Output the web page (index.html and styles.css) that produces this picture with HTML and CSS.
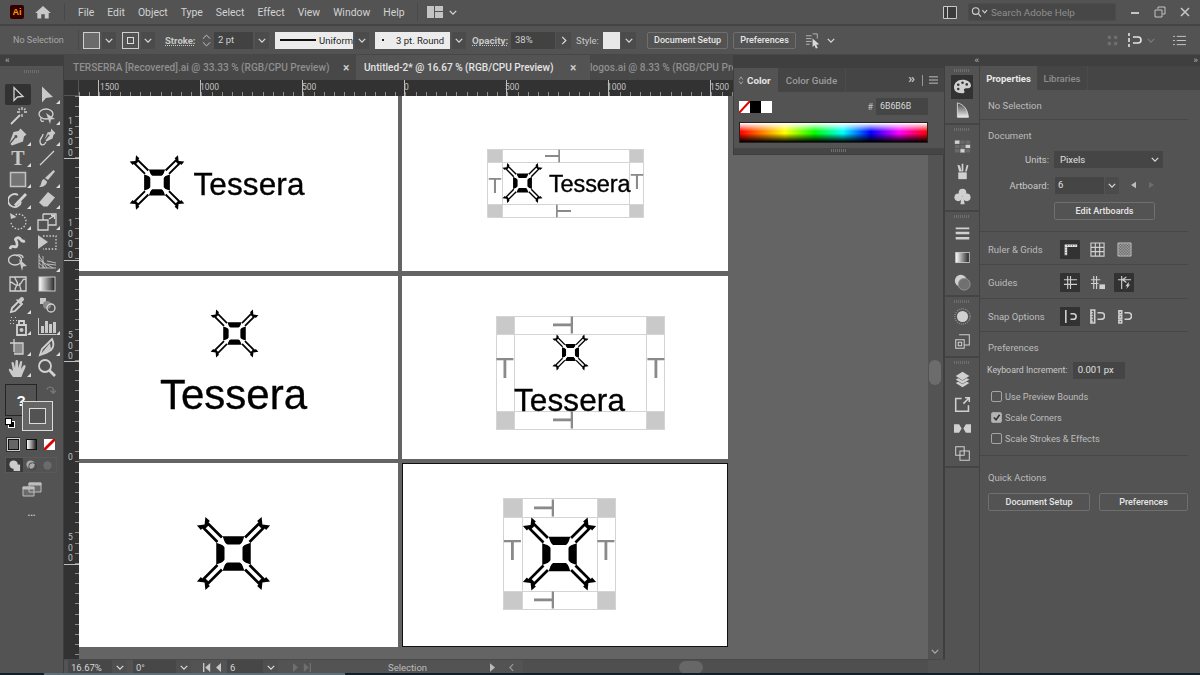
FILE: index.html
```html
<!DOCTYPE html>
<html lang="en">
<head>
<meta charset="utf-8">
<title>Illustrator</title>
<link rel="stylesheet" href="styles.css">
</head>
<body>
<svg class="defs" width="0" height="0" aria-hidden="true">
  <defs>
    <linearGradient id="gr"><stop offset="0" stop-color="#fff"/><stop offset="1" stop-color="#222"/></linearGradient>
    <pattern id="chk" width="3" height="3" patternUnits="userSpaceOnUse"><rect width="1.500" height="1.500" fill="#b8b8b8"/><rect x="1.500" y="1.500" width="1.500" height="1.500" fill="#b8b8b8"/></pattern>
    <g id="arm">
      <path fill="#000" d="M26-6H53V-8.500L61-8 54.500 0 61 8 53 8.500V6H26z"/>
      <path fill="#fff" d="M0-2.400H50V2.400H0z"/>
    </g>
    <symbol id="logo" viewBox="-50 -50 100 100">
      <path fill="#000" d="M-14.500-23H14.500L10.500-12H-10.500zM14.500 23H-14.500L-10.500 12H10.500zM-23-14.500V14.500L-12 10.500V-10.500zM23 14.500V-14.500L12-10.500V10.500z"/>
      <use href="#arm" transform="rotate(45)"/>
      <use href="#arm" transform="rotate(135)"/>
      <use href="#arm" transform="rotate(225)"/>
      <use href="#arm" transform="rotate(315)"/>
    </symbol>
  </defs>
</svg>

<header class="menubar">
  <div class="ai-logo">Ai</div>
  <svg class="home" viewBox="0 0 18 16"><path d="M9 1L0 9h2.500v6.500h4.500v-5h4v5h4.500V9H18z"/></svg>
  <span class="vsep"></span>
  <nav class="menu"><span>File</span><span>Edit</span><span>Object</span><span>Type</span><span>Select</span><span>Effect</span><span>View</span><span>Window</span><span>Help</span></nav>
  <span class="vsep sep2"></span>
  <svg class="wsicon" viewBox="0 0 16 12"><path d="M0 0h7v12H0zM8 0h8v5H8zM8 6h8v6H8z"/></svg>
  <svg class="chev" viewBox="0 0 10 6"><path d="M1 1l4 4 4-4"/></svg>
  <div class="spacer"></div>
  <svg class="arrange" viewBox="0 0 14 13"><path d="M.5.500h13v12H.5zM4.500.500v12"/></svg>
  <div class="search"><svg viewBox="0 0 18 12"><circle cx="5" cy="5" r="3.500"/><path d="M8 8l2.500 3M12 4l2.500 3L17 4"/></svg><span>Search Adobe Help</span></div>
  <div class="winbtns">
    <svg viewBox="0 0 12 12"><path d="M2 7h8" stroke-width="2"/></svg>
    <svg viewBox="0 0 12 12"><path d="M4 3V1h7v7H8.500M1 4h7v7H1z"/></svg>
    <svg viewBox="0 0 12 12"><path d="M2 2l8 8M10 2l-8 8" stroke-width="1.600"/></svg>
  </div>
</header>

<section class="ctrl">
  <span class="grip-v"></span>
  <span class="lbl dim nosel">No Selection</span>
  <span class="vline"></span>
  <span class="swatch gray"></span><span class="dd"><svg class="chev" viewBox="0 0 10 6"><path d="M1 1l4 4 4-4"/></svg></span>
  <span class="swatch strokeS"><i></i></span><span class="dd"><svg class="chev" viewBox="0 0 10 6"><path d="M1 1l4 4 4-4"/></svg></span>
  <span class="lbl ul strokeL">Stroke:</span>
  <span class="spin"><svg viewBox="0 0 10 16"><path d="M1 6l4-4 4 4M1 10l4 4 4-4"/></svg></span>
  <span class="field w2pt">2 pt</span><span class="dd"><svg class="chev" viewBox="0 0 10 6"><path d="M1 1l4 4 4-4"/></svg></span>
  <span class="wfield uni"><i class="strokeline"></i><b>Uniform</b></span><span class="dd"><svg class="chev" viewBox="0 0 10 6"><path d="M1 1l4 4 4-4"/></svg></span>
  <span class="wfield rnd"><i class="dot"></i><b>3 pt. Round</b></span><span class="dd"><svg class="chev" viewBox="0 0 10 6"><path d="M1 1l4 4 4-4"/></svg></span>
  <span class="lbl ul opL">Opacity:</span>
  <span class="field wop">38%</span><span class="dd nar"><svg class="chevr" viewBox="0 0 6 10"><path d="M1 1l4 4-4 4"/></svg></span>
  <span class="lbl styL">Style:</span>
  <span class="wswatch"></span><span class="dd nar2"><svg class="chev" viewBox="0 0 10 6"><path d="M1 1l4 4 4-4"/></svg></span>
  <span class="btn docb">Document Setup</span>
  <span class="btn prefb">Preferences</span>
  <svg class="arr-ic" viewBox="0 0 18 18"><path d="M1 4h6M1 7h6M1 10h6M1 13h4M8 2h5v5" fill="none"/><path class="f" d="M8 7l7 6-3 .5 1.500 3.500-2 .5-1.500-3.500-2 2z"/></svg>
  <svg class="chev" viewBox="0 0 10 6"><path d="M1 1l4 4 4-4"/></svg>
  <div class="spacer"></div>
  <svg class="dimic" viewBox="0 0 14 14"><path d="M1 1h4v4H1zM9 1h4v4H9zM1 9h4v4H1zM9 9h4v4H9z"/></svg>
  <svg class="mag" viewBox="0 0 16 16"><path d="M2 1v3M2 6v4M2 12v3M6 5h5a3 3 0 0 1 0 6H6"/></svg>
  <svg class="chev dimchev" viewBox="0 0 10 6"><path d="M1 1l4 4 4-4"/></svg>
  <svg class="listic" viewBox="0 0 14 12"><path d="M0 1.500h2M4 1.500h10M0 6h2M4 6h10M0 10.500h2M4 10.500h10"/></svg>
</section>

<main class="work">
  <aside class="tools">
    <div class="striphead"><span class="arrows">‹‹</span></div>
    <div class="griprow"><span class="grip"></span></div>
    <div class="toolgrid">
      <span class="tool active"><svg viewBox="0 0 20 20"><path class="o" d="M6 2.500v13l3.500-3.500 5.500-.5z"/></svg></span>
      <span class="tool m"><svg viewBox="0 0 20 20"><path d="M5 1.500v16l4-4.500 7-1z"/></svg></span>
      <span class="tool"><svg viewBox="0 0 20 20"><path class="o t" d="M3 18L12 9"/><path class="o" d="M14 1v3M14 8v3M9 6h3M16 6h3M10.500 2.500l1.500 1.500M17.500 2.500L16 4"/></svg></span>
      <span class="tool m"><svg viewBox="0 0 20 20"><ellipse class="o" cx="9" cy="8" rx="7" ry="5"/><path class="o" d="M4 12c-1 3 1 4 3 3"/><path d="M9 7l9 6-4 .5-1 4.500z"/></svg></span>
      <span class="tool m"><svg viewBox="0 0 20 20"><path d="M12.500 1.500l6 6-2.500 2-1 5-11 4-1.500-1.500 5-6a1.500 1.500 0 1 0-1-1l-5 6 4-11 5-1z"/></svg></span>
      <span class="tool m"><svg viewBox="0 0 20 20"><path d="M14 1.500l4.500 4.500-2 2-1 3.500-6 3-1-1 3-4a1 1 0 1 0-1-1l-3 4 3-7 3.500-1z"/><path class="o" d="M9 15c-2 4-6 4-6-1 0-3 3-4 3-7"/></svg></span>
      <span class="tool m"><svg viewBox="0 0 20 20"><text class="ttool" x="10" y="17">T</text></svg></span>
      <span class="tool"><svg viewBox="0 0 20 20"><path class="o" d="M3 17L17 3"/></svg></span>
      <span class="tool m"><svg viewBox="0 0 20 20"><path class="rectic" d="M2.500 3.500h15v14h-15z"/></svg></span>
      <span class="tool m"><svg viewBox="0 0 20 20"><path d="M16.500 1l1.500 1.500-7 8.500-3-2zM7 10l3 2.500c0 3.500-3.500 5.500-8 5.500 3-1.500 1.500-7 5-8z"/></svg></span>
      <span class="tool m"><svg viewBox="0 0 20 20"><path class="o t" d="M10 5a6.500 6.500 0 1 0 3 6.500"/><path class="o th" d="M7 15.500L18 4"/></svg></span>
      <span class="tool m"><svg viewBox="0 0 20 20"><path d="M11 2l7 5.500-7.500 9H6.500L2 12.500z"/></svg></span>
      <span class="tool m"><svg viewBox="0 0 20 20"><path class="o dash" d="M5 5.500a7.500 7.500 0 1 1-2 5.500"/><path d="M2 2l1 6 5.500-2z"/></svg></span>
      <span class="tool m"><svg viewBox="0 0 20 20"><path class="o" d="M1 9h10v10H1zM6 3h13v11H11M6 9V3"/><path class="o" d="M12 8l5-3M14 4.500h3.500V8"/></svg></span>
      <span class="tool"><svg viewBox="0 0 20 20"><path class="o th" d="M2 17c2-6 6 1 7-4s-4-5 0-7 3 5 8 3"/></svg></span>
      <span class="tool"><svg viewBox="0 0 20 20"><path class="o dash" d="M6 4h13v13H6"/><path d="M1 3l10 7-10 7z"/></svg></span>
      <span class="tool"><svg viewBox="0 0 20 20"><ellipse class="o" cx="7" cy="7" rx="6.500" ry="5"/><path class="o" d="M8 3c3-2 7-1 7 2"/><path d="M11 6l8 7-4 .5-1 4.500z"/></svg></span>
      <span class="tool m"><svg viewBox="0 0 20 20"><path class="o thin" d="M2 1v14h17M2 3l8 12M2 7l14 8M2 10l6 5M6 3v12M10 8l9 2M10 11l9 1"/></svg></span>
      <span class="tool"><svg viewBox="0 0 20 20"><path class="o" d="M2 3h16v14H2zM2 8c4 0 5 5 9 3s3-8 7-5M7 3c-1 3 4 4 2 8s-2 3-2 6M13 17c0-3-2-4-1-8"/></svg></span>
      <span class="tool"><svg viewBox="0 0 20 20"><rect x="2" y="3" width="16" height="14" fill="url(#gr)" stroke="#ccc"/></svg></span>
      <span class="tool m"><svg viewBox="0 0 20 20"><path class="o t" d="M3 17l1-4 7-7 3 3-7 7z"/><path d="M10 5l2-2c2-3 6 1 3 3l-2 2 1 1-1 1-5-5 1-1z"/></svg></span>
      <span class="tool"><svg viewBox="0 0 20 20"><path d="M3 3h6v6H3z"/><circle cx="10" cy="10" r="4" class="g"/><circle class="o" cx="14" cy="13" r="4"/></svg></span>
      <span class="tool m"><svg viewBox="0 0 20 20"><path d="M2 4h1v1H2zM5 4h1v1H5zM8 4h1v1H8zM2 7h1v1H2zM5 7h1v1H5zM3 1h1v1H3zM7 1h1v1H7z"/><path class="o t" d="M9 9h9v10H9zM11 9V5h5v4"/><circle cx="13.500" cy="14" r="2"/></svg></span>
      <span class="tool m"><svg viewBox="0 0 20 20"><path d="M1 2h1v16h17v1H1zM4 10h3v7H4zM8 5h3v12H8zM12 8h3v9h-3zM16 6h3v11h-3z"/></svg></span>
      <span class="tool m"><svg viewBox="0 0 20 20"><path class="g" d="M6 6h9v11H6z"/><path class="o" d="M2 6h13M6 2v13M6 6h9v11H6"/></svg></span>
      <span class="tool m"><svg viewBox="0 0 20 20"><path class="o t" d="M3 18l2-6L15 2c2 4 2 8-1 11l-5 3z"/><path d="M13 6l1 6-5 4-6 2z"/></svg></span>
      <span class="tool m"><svg viewBox="0 0 20 20"><path d="M5 19C3 16 0 12 1 11s3 1 4 2L3.500 5c0-1.500 2-1.500 2.300 0L7 10 7.500 3c.2-1.500 2.300-1.500 2.500 0l.3 7 1.700-6c.4-1.500 2.400-1 2.200.5L13 11l2.500-3.500c1-1 2.500 0 2 1.500-1 3-3 6-4 10z"/></svg></span>
      <span class="tool"><svg viewBox="0 0 20 20"><circle class="o t" cx="8" cy="8" r="6"/><path class="o th" d="M12.500 12.500L18 18"/></svg></span>
    </div>

    <div class="fillstroke">
      <span class="fillbox">?</span>
      <span class="strokebox"><i></i></span>
      <svg class="swap" viewBox="0 0 12 12"><path d="M2 5a4 4 0 0 1 7-1v5M6 6l3 3 3-3"/></svg>
      <span class="defaults"><i></i><b></b></span>
    </div>
    <div class="moderow">
      <span class="modebtn active"><i class="m-color"></i></span>
      <span class="modebtn"><i class="m-grad"></i></span>
      <span class="modebtn"><svg class="m-none" viewBox="0 0 12 12"><path d="M0 0h12v12H0z" fill="#fff"/><path d="M0 12L12 0" stroke="#d00" stroke-width="3"/></svg></span>
    </div>
    <div class="drawrow">
      <span class="drawbtn active"><svg viewBox="0 0 14 14"><circle cx="6" cy="6" r="4.500"/><rect x="6" y="6" width="7" height="7"/></svg></span>
      <span class="drawbtn"><svg viewBox="0 0 14 14"><circle cx="6" cy="6" r="4.500"/><circle cx="8" cy="8" r="4" fill="none" stroke="#444"/></svg></span>
      <span class="drawbtn faint"><svg viewBox="0 0 14 14"><circle cx="7" cy="7" r="4.500"/></svg></span>
    </div>
    <svg class="screenmode" viewBox="0 0 20 15"><path d="M1 5h11v9H1zM7 1h12v9H7z"/><path class="top" d="M1 5h11v2H1zM7 1h12v2H7z"/></svg>
    <div class="ellip">•••</div>
  </aside>

  <div class="center">
    <div class="tabs">
      <span class="tab t1"><span>TERSERRA [Recovered].ai @ 33.33 % (RGB/CPU Preview)</span><em>×</em></span>
      <span class="tab t2 on"><span>Untitled-2* @ 16.67 % (RGB/CPU Preview)</span><em>×</em></span>
      <span class="tab t3"><span>logos.ai @ 8.33 % (RGB/CPU Preview)</span></span>
    </div>

    <div class="hruler">
      <span class="rcorner"></span>
      <div class="hticks">
        <span class="hl l1">1500</span><span class="hl l2">1000</span><span class="hl l3">500</span><span class="hl l4">0</span><span class="hl l5">500</span><span class="hl l6">1000</span><span class="hl l7">1500</span>
      </div>
    </div>

    <div class="canvasrow">
      <div class="vruler">
        <span class="vl v1">1<br>5<br>0<br>0</span><span class="vl v2">1<br>0<br>0<br>0</span><span class="vl v3">5<br>0<br>0</span><span class="vl v4">0</span><span class="vl v5">5<br>0<br>0</span>
      </div>
      <div class="canvas">
        <div class="boards">
          <div class="board">
            <svg class="art" viewBox="79 96 319 175">
              <use href="#logo" x="129" y="154.500" width="56" height="56"/>
              <text class="word" x="193.500" y="194.500" font-size="31.500" textLength="111" lengthAdjust="spacing">Tessera</text>
            </svg>
          </div>
          <div class="board">
            <svg class="art" viewBox="402 96 326 175">
              <path class="guide-fill" d="M487 149h15v13h-15zM629 149h15v13h-15zM487 204h15v13h-15zM629 204h15v13h-15z"/>
              <path class="guide" d="M487.500 149.500h156v68h-156zM487 162.500h157M487 204.500h157M502.500 149v68M629.500 149v68"/>
              <use href="#logo" x="502" y="162.500" width="41" height="41"/>
              <text class="word" x="549" y="192" font-size="23.500" textLength="81.500" lengthAdjust="spacing">Tessera</text>
              <text class="mark" font-size="22" transform="translate(495 185)" y="8">T</text>
              <text class="mark" font-size="22" transform="translate(637 181)" y="8">T</text>
              <text class="mark" font-size="22" transform="translate(553 156) rotate(90)" y="8">T</text>
              <text class="mark" font-size="22" transform="translate(563 211) rotate(-90)" y="8">T</text>
            </svg>
          </div>
          <div class="board">
            <svg class="art" viewBox="79 276 319 183">
              <use href="#logo" x="210" y="309" width="49" height="49"/>
              <text class="word" x="160" y="409" font-size="42" textLength="147" lengthAdjust="spacing">Tessera</text>
            </svg>
          </div>
          <div class="board">
            <svg class="art" viewBox="402 276 326 183">
              <path class="guide-fill" d="M496 316h19v19h-19zM646 316h19v19h-19zM496 411h19v19h-19zM646 411h19v19h-19z"/>
              <path class="guide" d="M496.500 316.500h168v113h-168zM496 334.500h169M496 411.500h169M514.500 316v114M646.500 316v114"/>
              <use href="#logo" x="552" y="334" width="37" height="37"/>
              <text class="word" x="514" y="411" font-size="31.500" textLength="111" lengthAdjust="spacing">Tessera</text>
              <text class="mark" font-size="30" transform="translate(505 367.500)" y="10.700">T</text>
              <text class="mark" font-size="30" transform="translate(656 367.500)" y="10.700">T</text>
              <text class="mark" font-size="30" transform="translate(564 325) rotate(90)" y="10.700">T</text>
              <text class="mark" font-size="30" transform="translate(564 420) rotate(90)" y="10.700">T</text>
            </svg>
          </div>
          <div class="board">
            <svg class="art" viewBox="79 463 319 184">
              <use href="#logo" x="196" y="516" width="75" height="75"/>
            </svg>
          </div>
          <div class="board current">
            <svg class="art" viewBox="402 463 326 184">
              <path class="guide-fill" d="M503 498h19v19h-19zM597 498h19v19h-19zM503 591h19v19h-19zM597 591h19v19h-19z"/>
              <path class="guide" d="M503.500 498.500h112v111h-112zM503 517.500h113M503 591.500h113M522.500 498v112M597.500 498v112"/>
              <use href="#logo" x="522" y="516.500" width="75" height="75"/>
              <text class="mark" font-size="30" transform="translate(512.500 549)" y="10.700">T</text>
              <text class="mark" font-size="30" transform="translate(606 549)" y="10.700">T</text>
              <text class="mark" font-size="30" transform="translate(545 508) rotate(90)" y="10.700">T</text>
              <text class="mark" font-size="30" transform="translate(545 600) rotate(90)" y="10.700">T</text>
            </svg>
          </div>
        </div>
      </div>
      <div class="vscroll"><span class="vthumb"></span><svg class="chev vdown" viewBox="0 0 10 6"><path d="M1 1l4 4 4-4"/></svg></div>
    </div>

    <footer class="status">
      <span class="sfield szoom">16.67%</span><span class="dd sdd"><svg class="chev" viewBox="0 0 10 6"><path d="M1 1l4 4 4-4"/></svg></span>
      <span class="sfield sang">0°</span><span class="dd sdd"><svg class="chev" viewBox="0 0 10 6"><path d="M1 1l4 4 4-4"/></svg></span>
      <svg class="nav" viewBox="0 0 22 10"><path d="M1 0h1.500v10H1zM9 0v10L3.500 5zM21 0v10l-5.500-5z"/></svg>
      <span class="sfield snum">6</span><span class="dd sdd"><svg class="chev" viewBox="0 0 10 6"><path d="M1 1l4 4 4-4"/></svg></span>
      <svg class="nav dimnav" viewBox="0 0 22 10"><path d="M1 0v10l5.500-5zM13 0v10l5.500-5zM19.500 0H21v10h-1.500z"/></svg>
      <span class="sel">Selection</span>
      <svg class="play" viewBox="0 0 6 10"><path d="M0 0v10l6-5z"/></svg>
      <svg class="chevr back" viewBox="0 0 6 10"><path d="M5 1L1 5l4 4"/></svg>
      <div class="htrack"><span class="hthumb"></span></div>
    </footer>

    <div class="colorpanel">
      <div class="cp-tabs">
        <span class="cp-tab on"><svg class="updown" viewBox="0 0 6 10"><path d="M1 4l2-3 2 3M1 6l2 3 2-3"/></svg>Color</span>
        <span class="cp-tab">Color Guide</span>
        <span class="spacer"></span>
        <span class="cp-more">››</span><span class="cp-bar"></span>
        <svg class="cp-menu" viewBox="0 0 10 8"><path d="M0 .500h10M0 4h10M0 7.500h10"/></svg>
      </div>
      <div class="cp-row">
        <span class="sw-none"><svg viewBox="0 0 11 12"><path d="M0 0h11v12H0z" fill="#fff"/><path d="M0 12L11 0" stroke="#d00" stroke-width="2"/></svg></span>
        <span class="sw-black"></span><span class="sw-white"></span>
        <span class="spacer"></span>
        <span class="hash">#</span><span class="hexf">6B6B6B</span>
      </div>
      <div class="spectrum"></div>
      <div class="cp-foot"><span class="grip"></span></div>
    </div>
  </div>

  <div class="dock">
    <div class="dstrip"><span class="arrows">‹‹</span></div>
    <div class="dgroup g1">
      <span class="grip"></span>
      <span class="dicon active"><svg viewBox="0 0 20 18"><path d="M10 1C4 1 0 5 0 10c0 4 3 7 9 7 3 0 4-1 3-3s0-3 3-3c3 0 5-1 5-3 0-4-4-7-10-7z"/><g class="holes"><circle cx="5" cy="7" r="1.500"/><circle cx="10" cy="4.500" r="1.500"/><circle cx="15" cy="6.500" r="1.500"/><circle cx="5" cy="12" r="1.500"/></g></svg></span>
      <span class="dicon"><svg viewBox="0 0 20 20"><defs><linearGradient id="gt" x1="0" y1="0" x2="0" y2="1"><stop offset="0" stop-color="#444"/><stop offset="1" stop-color="#eee"/></linearGradient></defs><path d="M4 1c8 2 12 8 13 17H4z" fill="url(#gt)" stroke="#ddd"/></svg></span>
    </div>
    <div class="dgroup g2">
      <span class="grip"></span>
      <span class="dicon"><svg viewBox="0 0 20 16"><path d="M1 1h18v14H1z" class="dim"/><path d="M1 1h6v4H1zM13 5h6v5h-6zM7 10h6v5H7z"/><path class="ln" d="M1 5.500h18M1 10.500h18M7 1v14M13 1v14"/></svg></span>
      <span class="dicon"><svg viewBox="0 0 20 20"><path d="M5 11h10v8H5z"/><path d="M6 10L4 2l3 1 2 7zM9 10V1h2v9zM13 10l2-8 2 1-2 7z"/></svg></span>
      <span class="dicon"><svg viewBox="0 0 20 20"><circle cx="10" cy="5.500" r="4.500"/><circle cx="5" cy="11" r="4.500"/><circle cx="15" cy="11" r="4.500"/><path d="M9 10h2l1.500 9h-5z"/></svg></span>
    </div>
    <div class="dgroup g3">
      <span class="grip"></span>
      <span class="dicon"><svg viewBox="0 0 20 16"><path d="M2 1h16v2H2zM2 6h16v3H2zM2 12h16v3H2z"/></svg></span>
      <span class="dicon"><svg viewBox="0 0 20 16"><rect x="2" y="2" width="16" height="12" fill="url(#gr)" stroke="#ccc"/></svg></span>
      <span class="dicon"><svg viewBox="0 0 20 20"><circle cx="8" cy="8" r="7"/><circle cx="12" cy="12" r="7" class="dk"/></svg></span>
    </div>
    <div class="dgroup g4">
      <span class="grip"></span>
      <span class="dicon"><svg viewBox="0 0 20 20"><circle cx="10" cy="10" r="6.500"/><circle class="dashring" cx="10" cy="10" r="9"/></svg></span>
      <span class="dicon"><svg class="lineic" viewBox="0 0 20 20"><path d="M6 2h12v12h-6M2 8h10v10H2zM5 11h4v4H5z"/></svg></span>
    </div>
    <div class="dgroup g5">
      <span class="grip"></span>
      <span class="dicon"><svg viewBox="0 0 20 20"><path d="M10 1l8 5-8 5-8-5zM2 10l3-1.500 5 3 5-3 3 1.500-8 5zM2 14l3-1.500 5 3 5-3 3 1.500-8 5z"/></svg></span>
      <span class="dicon"><svg class="lineic lg" viewBox="0 0 20 20"><path d="M9 3H2v15h15v-7M11 9l7-7M13 2h5v5"/></svg></span>
      <span class="dicon"><svg viewBox="0 0 20 12"><path d="M0 1h6l3 5-3 5H0zM20 1h-6l-3 5 3 5h6z"/></svg></span>
      <span class="dicon"><svg class="lineic" viewBox="0 0 20 20"><path d="M2 2h10v10H2zM7 7h11v11H7z"/></svg></span>
    </div>
  </div>

  <aside class="props">
    <div class="pstrip"><span class="arrows">››</span></div>
    <div class="ptabs"><span class="ptab on">Properties</span><span class="ptab">Libraries</span></div>
    <section class="sec s-nosel"><span class="dimt">No Selection</span></section>
    <section class="sec s-doc">
      <h4>Document</h4>
      <div class="prow r-units"><label>Units:</label><span class="pselect">Pixels<svg class="chev" viewBox="0 0 10 6"><path d="M1 1l4 4 4-4"/></svg></span></div>
      <div class="prow r-art"><label>Artboard:</label><span class="pfield">6</span><span class="dd pdd"><svg class="chev" viewBox="0 0 10 6"><path d="M1 1l4 4 4-4"/></svg></span>
        <svg class="tri" viewBox="0 0 6 8"><path d="M6 0v8L0 4z"/></svg><svg class="tri off" viewBox="0 0 6 8"><path d="M0 0v8l6-4z"/></svg></div>
      <div class="prow r-edit"><span class="btn editb">Edit Artboards</span></div>
    </section>
    <section class="sec s-icons s-ruler">
      <span class="dimt lab">Ruler &amp; Grids</span>
      <span class="picon active"><svg viewBox="0 0 18 16"><path d="M2 2h15v3H5v10H2z"/><path class="ticks" d="M5 3.500h12M3.500 5v10"/></svg></span>
      <span class="picon"><svg class="lineic" viewBox="0 0 16 16"><path d="M1 1h14v14H1zM1 5.700h14M1 10.300h14M5.700 1v14M10.300 1v14"/></svg></span>
      <span class="picon"><svg viewBox="0 0 16 16"><path d="M1 1h14v14H1z" fill="url(#chk)" stroke="#bbb"/></svg></span>
    </section>
    <section class="sec s-icons s-guides">
      <span class="dimt lab">Guides</span>
      <span class="picon active"><svg class="lineic" viewBox="0 0 16 16"><path d="M1 5h14M1 10h14M5 1v14M8 1v14"/></svg></span>
      <span class="picon"><svg class="lineic" viewBox="0 0 16 16"><path d="M1 5h10M1 9h8M4 1v14M7 1v14"/><path class="filled" d="M10 10h6v5h-6z"/></svg></span>
      <span class="picon active"><svg class="lineic" viewBox="0 0 16 16"><path d="M1 5h14M5 1v14M6 5l4-3M6 5l4 3"/><path class="filled" d="M12 8l-3 4h2l-1 3 4-5h-2l1-2z"/></svg></span>
    </section>
    <section class="sec s-icons s-snap">
      <span class="dimt lab">Snap Options</span>
      <span class="picon active"><svg class="lineic" viewBox="0 0 16 16"><path d="M3 1v14M8 5h3a3 3 0 0 1 0 6H8"/></svg></span>
      <span class="picon"><svg class="lineic" viewBox="0 0 16 16"><path d="M1 1h4v14H1zM1 4h2M1 7h2M1 10h2M1 13h2M8 4h4a3 3 0 0 1 0 7H8"/></svg></span>
      <span class="picon"><svg class="lineic" viewBox="0 0 16 16"><path d="M2 2h3v3H2zM2 7h3v3H2zM2 12h3v3H2zM8 4h4a3 3 0 0 1 0 7H8"/></svg></span>
    </section>
    <section class="sec s-pref">
      <h4>Preferences</h4>
      <div class="prow r-key"><label>Keyboard Increment:</label><span class="pfield kf">0.001 px</span></div>
      <div class="chk"><i></i><span>Use Preview Bounds</span></div>
      <div class="chk on"><i><svg viewBox="0 0 10 10"><path d="M2 5l2.500 2.500L8.500 2"/></svg></i><span>Scale Corners</span></div>
      <div class="chk"><i></i><span>Scale Strokes &amp; Effects</span></div>
    </section>
    <section class="sec s-quick">
      <h4>Quick Actions</h4>
      <div class="qbtns"><span class="btn qb1">Document Setup</span><span class="btn qb2">Preferences</span></div>
    </section>
  </aside>
</main>
<div class="taskstrip"><span></span></div>
</body>
</html>
```
FILE: styles.css
```css
* { box-sizing: border-box; }
html, body { margin: 0; padding: 0; }
body {
  width: 1200px; height: 675px; overflow: hidden; position: relative;
  background: #535353; color: #cfcfcf;
  font-family: Roboto, "Noto Sans", sans-serif; font-size: 10px;
  display: flex; flex-direction: column;
}
.defs { position: absolute; }
.spacer { flex: 1; }
svg { display: block; flex: none; }
.chev { width: 8px; height: 5px; fill: none; stroke: #d8d8d8; stroke-width: 1.6; }
.chevr { width: 6px; height: 9px; fill: none; stroke: #d8d8d8; stroke-width: 1.4; }

/* menu bar */
.menubar { height: 26px; flex: none; display: flex; align-items: center; border-bottom: 2px solid #444; padding-left: 10px; }
.ai-logo { width: 14px; height: 14px; background: #330000; border-radius: 2px; color: #ff9a00; font: bold 9px/14px "Liberation Sans", sans-serif; text-align: center; }
.home { width: 16px; height: 14px; margin-left: 11px; fill: #c8c8c8; }
.vsep { width: 1px; height: 18px; background: #484848; margin-left: 13px; }
.menu { display: flex; gap: 13px; margin-left: 13px; font-size: 10.400px; color: #d2d2d2; }
.sep2 { margin-left: 12px; }
.wsicon { width: 16px; height: 12px; margin-left: 9px; fill: #c4c4c4; }
.menubar > .chev { margin-left: 6px; }
.arrange { width: 14px; height: 13px; fill: #3c3c3c; stroke: #c8c8c8; }
.search { width: 148px; height: 18px; margin-left: 11px; background: #474747; border: 1px solid #4c4c4c; border-radius: 2px; display: flex; align-items: center; padding-left: 2px; color: #8e8e8e; font-size: 9.900px; }
.search svg { width: 17px; height: 12px; fill: none; stroke: #d0d0d0; stroke-width: 1.200; margin-right: 3px; }
.winbtns { display: flex; gap: 13px; padding: 0 9px 0 13px; }
.winbtns svg { width: 12px; height: 12px; fill: none; stroke: #c4c4c4; }

/* control bar */
.ctrl { height: 29px; flex: none; display: flex; align-items: center; border-bottom: 1px solid #474747; }
.grip-v { width: 3px; }
.lbl { font-size: 9.500px; color: #c8c8c8; white-space: nowrap; }
.dim { color: #a8a8a8; }
.ul { text-decoration: underline; text-decoration-style: dotted; }
.nosel { margin-left: 10px; width: 65px; font-size: 9px; }
.vline { width: 1px; height: 20px; background: #484848; }
.swatch { width: 17px; height: 17px; margin-left: 4px; border: 1px solid #cfcfcf; }
.swatch.gray { background: #6b6b6b; }
.strokeS { margin-left: 6px; padding: 4px; background: #535353; }
.strokeS i { display: block; width: 7px; height: 7px; border: 1.500px solid #ddd; }
.dd { width: 14px; height: 17px; margin-left: 2px; background: #4b4b4b; display: flex; align-items: center; justify-content: center; }
.strokeL { margin-left: 10px; width: 34px; font-weight: 700; }
.spin { width: 14px; height: 17px; display: flex; align-items: center; justify-content: center; }
.spin svg { width: 9px; height: 15px; fill: none; stroke: #d0d0d0; }
.field { height: 17px; background: #424242; color: #d0d0d0; font-size: 9.500px; line-height: 16px; padding-left: 4px; }
.w2pt { width: 39px; margin-left: 1px; }
.wfield { height: 17px; background: #ececec; display: flex; align-items: center; color: #1e1e1e; position: relative; }
.wfield b { font-weight: 400; font-size: 9.500px; }
.uni { width: 78px; margin-left: 6px; padding-left: 5px; }
.strokeline { width: 36px; height: 2px; background: #111; margin-right: 3px; }
.rnd { width: 75px; margin-left: 6px; padding-left: 7px; }
.dot { width: 2px; height: 2px; background: #222; margin-right: 12px; }
.opL { margin-left: 6px; width: 39px; font-size: 9.800px; font-weight: 700; }
.wop { width: 44px; }
.nar { width: 15px; margin-left: 1px; }
.styL { margin-left: 5px; width: 27px; font-size: 9.500px; }
.wswatch { width: 17px; height: 17px; background: #e8e8e8; }
.nar2 { width: 15px; margin-left: 1px; }
.btn { height: 17px; border: 1px solid #6f6f6f; border-radius: 2px; display: flex; align-items: center; justify-content: center; color: #e6e6e6; font-size: 9px; font-weight: 500; }
.docb { width: 81px; margin-left: 11px; }
.prefb { width: 63px; margin-left: 5px; }
.arr-ic { width: 17px; height: 17px; margin-left: 9px; stroke: #b8b8b8; fill: none; }
.arr-ic .f { fill: #d8d8d8; stroke: none; }
.ctrl > .chev { margin-left: 5px; }
.dimic { width: 11px; height: 11px; fill: #6e6e6e; }
.mag { width: 16px; height: 16px; margin-left: 9px; fill: none; stroke: #e4e4e4; stroke-width: 1.600; }
.dimchev { stroke: #7a7a7a; }
.ctrl > .dimchev { margin-left: 4px; }
.listic { width: 13px; height: 11px; margin: 0 14px 0 18px; fill: none; stroke: #cfcfcf; }

/* work area */
.work { flex: 1; display: flex; min-height: 0; position: relative; }

/* tools */
.tools { width: 64px; flex: none; background: #535353; border-right: 1px solid #3f3f3f; position: relative; }
.striphead { height: 11px; background: #3f3f3f; padding-left: 5px; line-height: 9px; }
.arrows { color: #bcbcbc; font-size: 9px; letter-spacing: -1px; }
.grip { display: block; width: 16px; height: 3px; background: repeating-linear-gradient(90deg, #6e6e6e 0 1px, transparent 1px 2px); }
.griprow { display: flex; justify-content: center; height: 18px; padding-top: 4px; }
.toolgrid { display: grid; grid-template-columns: 26px 26px; grid-auto-rows: 21px; column-gap: 3px; padding-left: 5px; }
.tool { position: relative; display: flex; align-items: center; justify-content: center; fill: #c9c9c9; }
.tool svg { width: 20px; height: 20px; }
.tool.active { background: #323232; border-radius: 2px; }
.tool.m::after { content: ""; position: absolute; right: 0; bottom: 1px; border: 2px solid transparent; border-right-color: #dcdcdc; border-bottom-color: #dcdcdc; }
.o { fill: none; stroke: #d2d2d2; stroke-width: 1.300; }
.o.t { stroke-width: 1.800; }
.o.th { stroke-width: 2.800; }
.o.thin { stroke-width: .8; }
.o.dash { stroke-dasharray: 1.500 1.700; }
.g { fill: #8a8a8a; }
.rectic { fill: #747474; stroke: #c2c2c2; stroke-width: 1.500; }
.ttool { font: bold 20px "Liberation Serif", serif; text-anchor: middle; fill: #c8c8c8; }

.fillstroke { position: relative; height: 50px; margin-top: 6px; }
.fillbox { position: absolute; left: 5px; top: 0; width: 32px; height: 32px; border: 1px solid #262626; background: #535353; color: #fff; font: bold 15px/32px "Liberation Sans", sans-serif; text-align: center; }
.strokebox { position: absolute; left: 22px; top: 17px; width: 31px; height: 30px; background: #666; border: 1.500px solid #dcdcdc; padding: 6px; }
.strokebox i { display: block; height: 100%; border: 1.500px solid #dcdcdc; background: #535353; }
.swap { position: absolute; left: 45px; top: 1px; width: 11px; height: 11px; fill: none; stroke: #777; stroke-width: 1.500; }
.defaults { position: absolute; left: 5px; top: 34px; width: 11px; height: 11px; }
.defaults i, .defaults b { position: absolute; width: 7px; height: 7px; border: 1px solid #fff; }
.defaults i { left: 0; top: 0; background: #fff; z-index: 1; border-color: #000; }
.defaults b { left: 3px; top: 3px; background: #000; }
.moderow { display: flex; gap: 3px; padding-left: 6px; margin-top: 3px; height: 15px; }
.modebtn { width: 14px; height: 15px; display: flex; align-items: center; justify-content: center; }
.modebtn.active { background: #323232; }
.modebtn + .modebtn { margin-left: 1px; }
.m-color { width: 11px; height: 11px; border: 1px solid #111; background: #666; outline: 1px solid #ccc; }
.m-grad { width: 11px; height: 11px; background: linear-gradient(90deg, #fff, #222); border: 1px solid #111; }
.m-none { width: 11px; height: 11px; }
.drawrow { display: flex; margin: 5px 0 0 5px; height: 16px; width: 52px; border: 1px solid #5a5a5a; }
.drawbtn { flex: 1; display: flex; align-items: center; justify-content: center; fill: #a8a8a8; }
.drawbtn svg { width: 13px; height: 13px; }
.drawbtn.active { background: #3a3a3a; fill: #ccc; }
.drawbtn.faint { fill: #6b6b6b; }
.screenmode { width: 20px; height: 15px; margin: 9px 0 0 22px; fill: #6a6a6a; stroke: #bdbdbd; }
.screenmode .top { fill: #bdbdbd; }
.ellip { text-align: center; font-size: 8px; color: #c8c8c8; margin-top: 14px; }

/* center */
.center { width: 881px; flex: none; display: flex; flex-direction: column; position: relative; }
.tabs { height: 25px; flex: none; background: #3f3f3f; display: flex; font-size: 10.100px; font-weight: 500; color: #8f8f8f; white-space: nowrap; overflow: hidden; }
.tab { display: flex; align-items: center; height: 25px; padding-left: 9px; overflow: hidden; flex: none; background: #484848; position: relative; }
.tab em { font-style: normal; color: #d0d0d0; font-size: 12px; position: absolute; }
.t1 { width: 292px; }
.t1 em { left: 279px; }
.t2 { width: 234px; padding-left: 8px; background: #535353; color: #e4e4e4; }
.t2 em { left: 214px; }
.t3 { width: 143px; padding-left: 0; }

.hruler { height: 16px; flex: none; display: flex; background: #323232; }
.rcorner { width: 15px; flex: none; border-right: 1px solid #555; border-bottom: 1px solid #555; }
.hticks {
  flex: 1; position: relative; color: #c2c2c2; font-size: 8.500px;
  background:
    repeating-linear-gradient(90deg, #bdbdbd 0 1px, transparent 1px 102px) 19px 0 / 100% 100% no-repeat,
    repeating-linear-gradient(90deg, #8c8c8c 0 1px, transparent 1px 10.200px) 0 12px / 100% 4px no-repeat;
}
.hl { position: absolute; top: 1px; line-height: 12px; }
.l1 { left: 21px; } .l2 { left: 121px; } .l3 { left: 223px; } .l4 { left: 325px; }
.l5 { left: 426px; } .l6 { left: 528px; } .l7 { left: 631px; }

.canvasrow { flex: 1; min-height: 0; display: flex; }
.vruler {
  width: 15px; flex: none; position: relative; color: #c2c2c2; font-size: 8.500px; line-height: 10.500px;
  background:
    repeating-linear-gradient(180deg, transparent 0 62px, #bdbdbd 62px 63px, transparent 63px 101.500px) 0 0 / 100% 100% no-repeat,
    repeating-linear-gradient(180deg, #8c8c8c 0 1px, transparent 1px 10.150px) 11px 0 / 4px 100% no-repeat,
    #323232;
}
.vl { position: absolute; left: 3px; text-align: center; width: 7px; }
.v1 { top: 20px; } .v2 { top: 122px; } .v3 { top: 234px; } .v4 { top: 356px; } .v5 { top: 436px; }

.canvas { flex: 1; min-width: 0; background: #646464; overflow: hidden; }
.boards { display: grid; grid-template-columns: 319px 326px; grid-template-rows: 175px 183px 184px; column-gap: 4px; row-gap: 4.500px; }
.board { background: #fff; position: relative; overflow: hidden; }
.board.current { outline: 1.500px solid #111; outline-offset: -1px; }
.art { width: 100%; height: 100%; will-change: opacity; }
.word { font-family: "Liberation Sans", Arial, sans-serif; fill: #000; stroke: #000; stroke-width: .35; }
.mark { font-family: "Liberation Sans", Arial, sans-serif; fill: #8a8a8a; text-anchor: middle; }
.guide-fill { fill: #c9c9c9; }
.guide { fill: none; stroke: #d4d4d4; stroke-width: 1; }

.vscroll { width: 17px; flex: none; background: #535353; border-right: 2px solid #3f3f3f; position: relative; }
.vthumb { position: absolute; left: 1px; top: 264px; width: 12px; height: 25px; background: #6c6c6c; border-radius: 6px; }
.vdown { position: absolute; left: 3px; bottom: 5px; stroke: #aaa; }

.status { height: 16px; flex: none; display: flex; align-items: center; background: #535353; font-size: 9.500px; padding-left: 4px; border-top: 1px solid #4a4a4a; }
.sfield { height: 15px; background: #474747; padding-left: 3px; line-height: 16px; color: #d4d4d4; }
.szoom { width: 44px; }
.sdd { width: 15px; height: 15px; margin-left: 0; background: #4f4f4f; }
.sang { width: 43px; margin-left: 6px; }
.nav { width: 22px; height: 9px; margin-left: 10px; fill: #c8c8c8; }
.dimnav { fill: #6f6f6f; margin-left: 13px; }
.snum { width: 36px; margin-left: 4px; }
.sel { margin-left: 75px; width: 108px; color: #bcbcbc; font-size: 9.500px; }
.play { width: 5px; height: 9px; fill: #bbb; margin-left: -6px; }
.back { margin-left: 14px; width: 5px; stroke: #999; }
.htrack { flex: 1; height: 15px; margin: 0 17px 0 9px; background: #4f4f4f; position: relative; }
.hthumb { position: absolute; left: 156px; top: 1px; width: 24px; height: 13px; border-radius: 7px; background: #676767; }

/* floating colour panel */
.colorpanel { position: absolute; left: 669px; top: 10px; width: 212px; height: 90px; background: #535353; border: 1px solid #3f3f3f; border-top-width: 3px; display: flex; flex-direction: column; }
.cp-tabs { height: 24px; flex: none; display: flex; align-items: center; background: #454545; font-size: 9.800px; font-weight: 700; color: #9c9c9c; }
.cp-tab { height: 24px; display: flex; align-items: center; padding: 0 11px 0 8px; }
.cp-tab.on { background: #535353; color: #e4e4e4; padding: 0 9px 0 4px; width: 44px; }
.cp-tab + .cp-tab { width: 68px; justify-content: center; padding: 0; border-right: 1px solid #4c4c4c; font-weight: 500; }
.updown { width: 6px; height: 9px; fill: none; stroke: #aaa; margin-right: 3px; }
.cp-more { color: #ccc; font-size: 13px; line-height: 12px; letter-spacing: -1px; margin-bottom: 3px; }
.cp-bar { width: 1px; height: 11px; background: #999; margin: 0 6px 0 8px; }
.cp-menu { width: 9px; height: 8px; margin-right: 6px; stroke: #ccc; fill: none; }
.cp-row { height: 25px; display: flex; align-items: center; padding: 4px 16px 0 5px; }
.sw-none svg { width: 11px; height: 12px; }
.sw-black { width: 11px; height: 12px; background: #000; }
.sw-white { width: 11px; height: 12px; background: #fff; }
.hash { color: #c4c4c4; font-size: 9px; margin-right: 3px; }
.hexf { width: 52px; height: 17px; background: #454545; color: #d8d8d8; font-size: 8.800px; line-height: 17px; padding-left: 4px; }
.spectrum { height: 21px; margin: 5px 16px 0 5px; background: linear-gradient(180deg, #fff 0, rgba(255,255,255,0) 45%, rgba(0,0,0,0) 55%, #000 100%), linear-gradient(90deg, #f00, #ff0 24%, #0f0 40%, #0ff 55%, #00f 70%, #f0f 85%, #f00); border: 1px solid #222; flex: none; }
.cp-foot { flex: 1; margin-top: 5px; background: #454545; display: flex; justify-content: center; padding-top: 1px; }

/* dock */
.dock { width: 35px; flex: none; background: #535353; border-right: 1px solid #424242; display: flex; flex-direction: column; }
.dstrip { height: 11px; background: #3f3f3f; flex: none; text-align: right; line-height: 9px; padding-right: 2px; margin-right: -1px; }
.dgroup { display: flex; flex-direction: column; align-items: center; border-bottom: 2px solid #454545; padding-top: 3px; flex: none; }
.dgroup > .grip { margin-bottom: 3px; }
.g4 > .grip { margin-bottom: 1px; }
.dicon { width: 22px; display: flex; align-items: center; justify-content: center; fill: #d0d0d0; }
.dicon svg { width: 17px; height: 17px; }
.dicon.active { background: #323232; }
.holes { fill: #323232; }
.g1 { height: 59px; } .g1 .dicon { height: 25px; }
.g2 { height: 87px; } .g2 .dicon { height: 25px; }
.g3 { height: 85px; } .g3 .dicon { height: 26px; }
.g4 { height: 61px; } .g4 .dicon { height: 25px; }
.g5 { height: 110px; } .g5 .dicon { height: 25px; }
.dim { fill: #6a6a6a; }
.ln { stroke: #535353; fill: none; }
.dk { fill: #707070; stroke: #999; }
.dashring { fill: none; stroke: #ccc; stroke-dasharray: 1 1.500; }
.lineic { fill: none; stroke: #d0d0d0; stroke-width: 1.200; }
.lineic.lg { stroke-width: 1.800; }
.filled { fill: #d0d0d0; stroke: none; }
.ticks { fill: none; stroke: #323232; stroke-dasharray: 1 2; }

/* properties */
.props { width: 220px; flex: none; background: #535353; display: flex; flex-direction: column; font-size: 9.500px; }
.pstrip { height: 11px; background: #3f3f3f; text-align: right; padding-right: 3px; line-height: 9px; flex: none; }
.ptabs { height: 24px; flex: none; display: flex; background: #454545; font-size: 9.500px; color: #8e8e8e; }
.ptab { display: flex; align-items: center; justify-content: center; width: 51px; border-right: 1px solid #4c4c4c; font-weight: 500; }
.ptab.on { width: 57px; background: #535353; color: #e8e8e8; border: 0; font-weight: 700; }
.sec { margin-right: 12px; padding-left: 8px; border-bottom: 1px solid #484848; flex: none; }
.sec h4 { margin: 0; font-weight: 400; font-size: 9.500px; color: #bcbcbc; line-height: 14px; }
.dimt { color: #bcbcbc; }
.s-nosel { height: 30px; padding-top: 9px; line-height: 14px; }
.s-doc { height: 112px; padding-top: 9px; }
.prow { display: flex; align-items: center; }
.prow label { width: 61px; text-align: right; margin-right: 5px; color: #c8c8c8; white-space: nowrap; }
.r-units { margin-top: 6px; height: 20px; }
.pselect { width: 109px; height: 17px; background: #454545; display: flex; align-items: center; justify-content: space-between; padding: 0 4px 0 6px; color: #e0e0e0; }
.r-art { margin-top: 7px; height: 18px; }
.pfield { width: 49px; height: 17px; background: #454545; line-height: 16px; padding-left: 3px; color: #e0e0e0; margin-left: 1px; }
.pdd { width: 14px; height: 17px; margin-left: 1px; }
.tri { width: 5px; height: 8px; fill: #bdbdbd; margin-left: 12px; }
.tri.off { fill: #6c6c6c; margin-left: 13px; }
.r-edit { margin-top: 8px; padding-left: 66px; }
.editb { width: 101px; height: 18px; }
.s-icons { display: flex; align-items: center; padding-top: 2px; }
.lab { width: 72px; }
.picon { width: 20px; height: 19px; margin-right: 7px; display: flex; align-items: center; justify-content: center; fill: #e4e4e4; }
.picon.active { background: #323232; border-radius: 1px; }
.picon svg { width: 15px; height: 15px; }
.s-ruler { height: 33px; }
.s-guides { height: 34px; }
.s-snap { height: 33px; }
.s-snap .lineic { stroke-width: 1.700; }
.s-pref { height: 124px; padding-top: 9px; }
.r-key { margin: 6px 0 0 -1px; height: 18px; }
.r-key label { width: auto; margin-right: 5px; font-size: 8.800px; }
.kf { width: 52px; margin: 0; padding-left: 5px; }
.chk { display: flex; align-items: center; height: 21px; padding-left: 3px; color: #bcbcbc; font-size: 9.200px; }
.r-key + .chk { margin-top: 7px; }
.chk i { width: 11px; height: 11px; border: 1px solid #a4a4a4; border-radius: 2px; margin-right: 3px; flex: none; display: block; }
.chk.on i { background: #b4b4b4; }
.chk.on svg { width: 9px; height: 9px; fill: none; stroke: #333; stroke-width: 1.800; }
.s-quick { border: 0; padding-top: 15px; }
.qbtns { display: flex; gap: 9px; margin-top: 8px; }
.qb1 { width: 102px; height: 18px; }
.qb2 { width: 89px; height: 18px; }

.taskstrip { position: absolute; left: 0; right: 0; bottom: 0; height: 2px; background: #12202c; }
.taskstrip span { display: block; width: 301px; height: 2px; margin-left: 44px; background: #5f6f7a; }
```
